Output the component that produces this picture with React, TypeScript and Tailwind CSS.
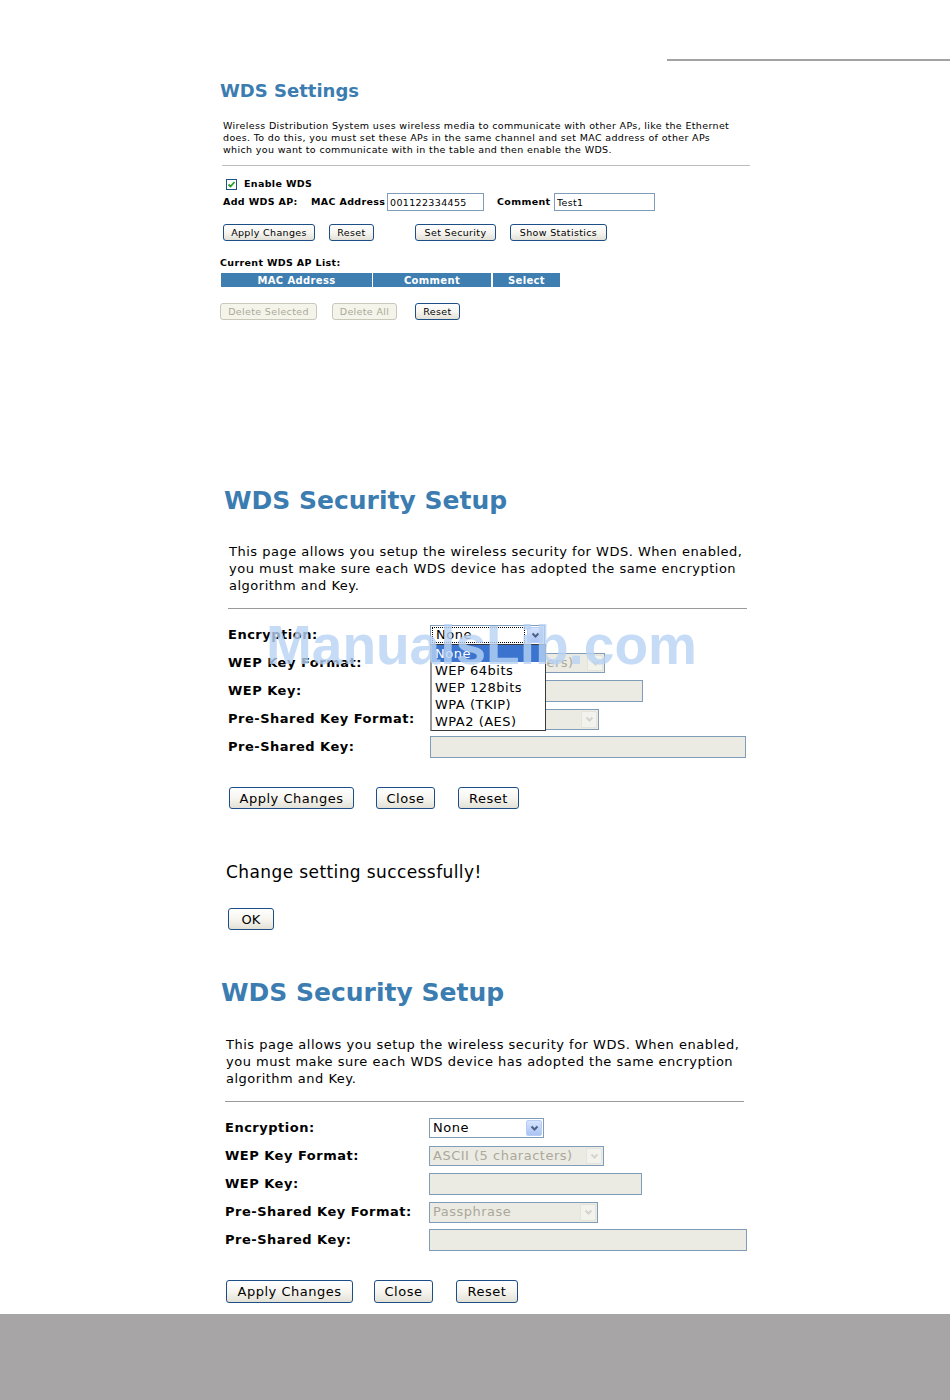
import clsx from 'clsx';

// XP-style form controls, as rendered in the router pages

function Btn({ children, className, disabled }: { children: React.ReactNode; className?: string; disabled?: boolean }) {
  return (
    <button
      disabled={disabled}
      className={clsx(
        'flex items-center justify-center rounded-[3px] border leading-none whitespace-nowrap',
        disabled
          ? 'border-[#cac8bb] bg-[#f5f4ea] text-[#aca899]'
          : 'border-[#1d4f86] bg-linear-to-b from-white via-[#f6f5f0] to-[#e3e1d6] text-black',
        className
      )}
    >
      {children}
    </button>
  );
}

function TextBox({ value, className, disabled }: { value?: string; className?: string; disabled?: boolean }) {
  return (
    <input
      readOnly
      disabled={disabled}
      value={value ?? ''}
      className={clsx(
        'border border-[#7f9db9] px-[2px] outline-none',
        disabled ? 'bg-[#ebebe4] text-[#aca899]' : 'bg-white text-black',
        className
      )}
    />
  );
}

function Arrow({ disabled }: { disabled?: boolean }) {
  return (
    <span
      className={clsx(
        'm-px flex w-[16px] shrink-0 items-center justify-center self-stretch rounded-[2px] border',
        disabled
          ? 'border-[#e4e4dc] bg-[#f3f3ee]'
          : 'border-[#b8cdf5] bg-linear-to-b from-[#d7e4fd] to-[#aac3f4]'
      )}
    >
      <svg width="9" height="7" viewBox="0 0 9 7">
        <path
          d="M1.5 1.5 L4.5 4.5 L7.5 1.5"
          fill="none"
          stroke={disabled ? '#d4d4cc' : '#4d6185'}
          strokeWidth="2"
        />
      </svg>
    </span>
  );
}

function Select({
  value,
  className,
  disabled,
  focused,
}: {
  value: string;
  className?: string;
  disabled?: boolean;
  focused?: boolean;
}) {
  return (
    <div
      className={clsx(
        'flex items-stretch border border-[#7f9db9]',
        disabled ? 'bg-[#ebebe4] text-[#aca899]' : 'bg-white text-black',
        className
      )}
    >
      <span
        className={clsx(
          'flex flex-1 items-center overflow-hidden pl-[3px] whitespace-nowrap',
          focused && 'm-px border border-dotted border-black pl-[2px]'
        )}
      >
        {value}
      </span>
      <Arrow disabled={disabled} />
    </div>
  );
}

function Checkbox() {
  return (
    <span className="flex h-[11px] w-[11px] items-center justify-center border border-[#1c5180] bg-white">
      <svg width="9" height="9" viewBox="0 0 9 9">
        <path d="M1.5 4.5 L3.5 6.5 L7.5 2" fill="none" stroke="#21a121" strokeWidth="1.8" />
      </svg>
    </span>
  );
}

function WdsSettings() {
  return (
    <section className="pl-[220px] text-[9.5px] tracking-[0.35px] text-black">
      <h1 className="mt-[17px] flex h-[24px] items-center text-[18px] font-bold tracking-normal text-[#3b7cb1]">
        WDS Settings
      </h1>
      <p className="mt-[18px] ml-[3px] leading-[12px] whitespace-nowrap">
        Wireless Distribution System uses wireless media to communicate with other APs, like the Ethernet
        <br />
        does. To do this, you must set these APs in the same channel and set MAC address of other APs
        <br />
        which you want to communicate with in the table and then enable the WDS.
      </p>
      <div className="mt-[9px] ml-[2px] h-px w-[528px] bg-[#bdbdbd]" />

      <div className="mt-[10px] ml-[6px] flex h-[16px] items-center gap-[7px]">
        <Checkbox />
        <span className="font-bold">Enable WDS</span>
      </div>
      <div className="mt-px ml-[3px] flex h-[18px] items-center">
        <span className="w-[88px] font-bold">Add WDS AP:</span>
        <span className="w-[76px] font-bold">MAC Address</span>
        <TextBox value="001122334455" className="h-[18px] w-[97px] text-[9.5px]" />
        <span className="ml-[13px] w-[57px] font-bold">Comment</span>
        <TextBox value="Test1" className="h-[18px] w-[101px] text-[9.5px]" />
      </div>

      <div className="mt-[13px] ml-[3px] flex h-[17px]">
        <Btn className="w-[92px]">Apply Changes</Btn>
        <Btn className="ml-[14px] w-[45px]">Reset</Btn>
        <Btn className="ml-[41px] w-[81px]">Set Security</Btn>
        <Btn className="ml-[14px] w-[97px]">Show Statistics</Btn>
      </div>

      <div className="mt-[15px] flex h-[14px] items-center font-bold">Current WDS AP List:</div>
      <div className="mt-[3px] ml-px flex h-[14px] text-[10px] font-bold text-white">
        <div className="flex w-[151px] items-center justify-center bg-[#3e7eb0]">MAC Address</div>
        <div className="ml-px flex w-[118px] items-center justify-center bg-[#3e7eb0]">Comment</div>
        <div className="ml-[2px] flex w-[67px] items-center justify-center bg-[#3e7eb0]">Select</div>
      </div>

      <div className="mt-[16px] flex h-[17px]">
        <Btn disabled className="w-[97px]">Delete Selected</Btn>
        <Btn disabled className="ml-[15px] w-[65px]">Delete All</Btn>
        <Btn className="ml-[18px] w-[45px]">Reset</Btn>
      </div>
    </section>
  );
}

function SecuritySetup({ open }: { open?: boolean }) {
  const rows: { label: string; control: React.ReactNode }[] = [
    {
      label: 'Encryption:',
      control: (
        <div className="relative">
          <Select value="None" focused={open} className="h-[20px] w-[115px]" />
          {open && (
            <ul className="absolute top-[19px] left-0 z-10 w-[116px] border border-l-2 border-[#3a3a3a] border-l-[#9a9a9a] bg-white leading-[17px]">
              <li className="bg-[#3a74cf] pl-[3px] text-white">None</li>
              <li className="pl-[3px]">WEP 64bits</li>
              <li className="pl-[3px]">WEP 128bits</li>
              <li className="pl-[3px]">WPA (TKIP)</li>
              <li className="pl-[3px]">WPA2 (AES)</li>
            </ul>
          )}
        </div>
      ),
    },
    { label: 'WEP Key Format:', control: <Select disabled value="ASCII (5 characters)" className="h-[20px] w-[175px]" /> },
    { label: 'WEP Key:', control: <TextBox disabled className="h-[22px] w-[213px]" /> },
    { label: 'Pre-Shared Key Format:', control: <Select disabled value="Passphrase" className="h-[21px] w-[169px]" /> },
    {
      label: 'Pre-Shared Key:',
      control: <TextBox disabled className={clsx('h-[22px]', open ? 'w-[316px]' : 'w-[318px]')} />,
    },
  ];

  return (
    <section
      className={clsx(
        'text-[13px] tracking-[0.5px] text-black',
        open ? 'mt-[164px] pl-[224px]' : 'mt-[46px] pl-[221px]'
      )}
    >
      <h1 className="flex h-[34px] items-center text-[25px] font-bold tracking-normal text-[#3b7cb1]">
        WDS Security Setup
      </h1>
      <p className={clsx('ml-[5px] leading-[17px] whitespace-nowrap', open ? 'mt-[25px]' : 'mt-[26px]')}>
        This page allows you setup the wireless security for WDS. When enabled,
        <br />
        you must make sure each WDS device has adopted the same encryption
        <br />
        algorithm and Key.
      </p>
      <div className="mt-[14px] ml-[4px] h-px w-[519px] bg-[#9a9a9a]" />

      <div className="mt-[12px] ml-[4px] flex flex-col">
        {rows.map((r) => (
          <div key={r.label} className="flex h-[28px] items-center">
            <span className={clsx('font-bold', open ? 'w-[202px]' : 'w-[204px]')}>{r.label}</span>
            {r.control}
          </div>
        ))}
      </div>

      <div className={clsx('mt-[26px] ml-[5px] flex', open ? 'h-[22px]' : 'h-[23px]')}>
        <Btn className={open ? 'w-[125px]' : 'w-[127px]'}>Apply Changes</Btn>
        <Btn className={clsx('w-[59px]', open ? 'ml-[22px]' : 'ml-[21px]')}>Close</Btn>
        <Btn className={clsx('ml-[23px]', open ? 'w-[61px]' : 'w-[62px]')}>Reset</Btn>
      </div>
    </section>
  );
}

export default function App() {
  return (
    <div className="relative flex h-[1400px] w-[950px] flex-col overflow-hidden bg-white font-['DejaVu_Sans',sans-serif]">
      <div className="mt-[59px] ml-auto h-[2px] w-[283px] bg-[#a3a3a3]" />
      <WdsSettings />

      <SecuritySetup open />
      <div className="pl-[226px] text-black">
        <div className="mt-[53px] flex h-[22px] items-center text-[17px] tracking-[0.4px]">
          Change setting successfully!
        </div>
        <Btn className="mt-[24px] ml-[2px] h-[22px] w-[46px] text-[13px]">OK</Btn>
      </div>

      <SecuritySetup />

      <div className="mt-[11px] flex-1 bg-[#a7a5a6]" />

      {/* site watermark over the open dropdown */}
      <div className="pointer-events-none absolute top-[604px] left-[266px] z-20 font-['Liberation_Sans',sans-serif] text-[55px] font-bold text-[#b8d3f4] opacity-80 select-none">
        ManualsLib.com
      </div>
    </div>
  );
}
